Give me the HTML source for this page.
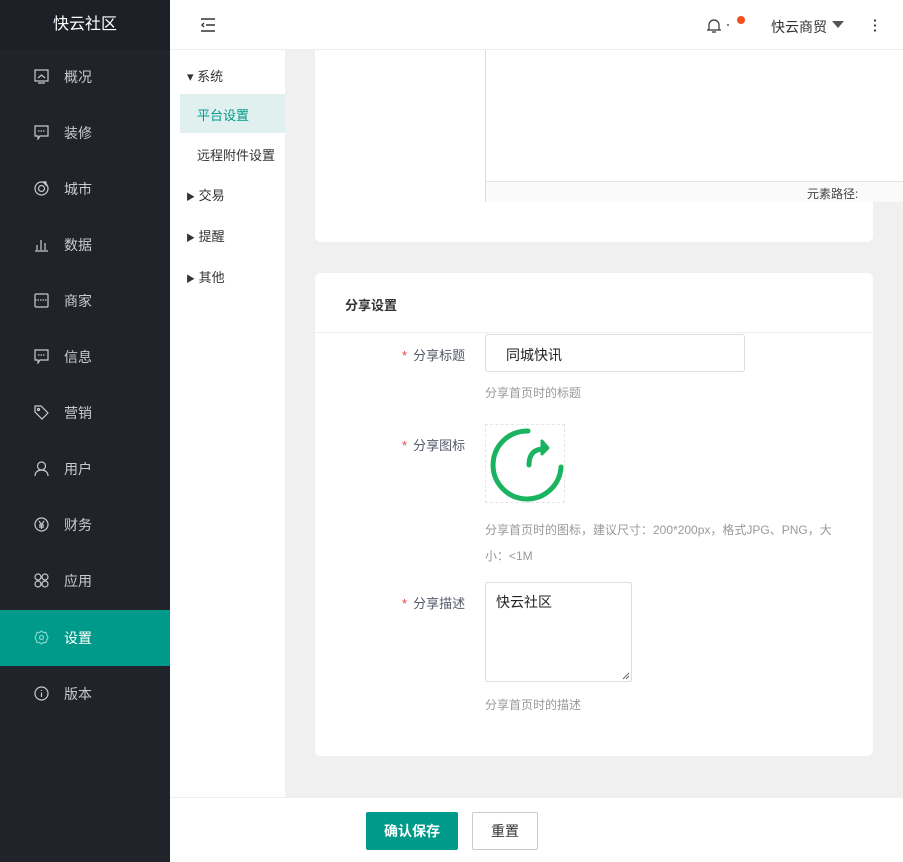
<!DOCTYPE html>
<html><head><meta charset="utf-8"><style>
*{margin:0;padding:0;box-sizing:border-box}
body{width:903px;height:862px;overflow:hidden;font-family:"Liberation Sans","Noto Sans CJK SC",sans-serif;background:#f0f0f0;position:relative;font-size:13px}
.sb{position:absolute;left:0;top:0;width:170px;height:862px;background:#20232a;z-index:6}
.logo{height:50px;line-height:50px;text-align:center;color:#fff;font-size:16px;background:#1e2027}
.it{position:absolute;left:0;width:170px;height:56px;color:#c9cacd;font-size:14px}
.it span{position:absolute;left:64px;top:18px}
.it svg{position:absolute;left:34px;top:20px}
.it.on{background:#009a8a;color:#fff}
.hd{position:absolute;left:170px;top:0;width:733px;height:50px;background:#fff;border-bottom:1px solid #eee;z-index:5}
.sub{position:absolute;left:170px;top:50px;width:115px;height:748px;background:#fff;font-size:13px;color:#333}
.sub div{position:absolute;left:0;width:115px}
.card{position:absolute;background:#fff;border-radius:6px}
.lbl{position:absolute;font-size:13px;color:#555a6a}
.lbl b{color:#f04040;font-weight:normal;margin-right:6px}
.hint{position:absolute;font-size:12px;color:#999}
.bot{position:absolute;left:170px;top:797px;width:733px;height:65px;background:#fff;border-top:1px solid #eee}
</style></head><body>
<div class="sb">
<div class="logo">快云社区</div>
<div class="it" style="top:49px"><svg width="15" height="15" viewBox="0 0 15 15" fill="none" stroke="#c9cacd" stroke-width="1.2"><rect x="1" y="1" width="13" height="11"/><path d="M4 9l3.5-3 3.5 3M4 14h7"/></svg><span>概况</span></div>
<div class="it" style="top:105px"><svg width="15" height="15" viewBox="0 0 15 15" fill="none" stroke="#c9cacd" stroke-width="1.2"><path d="M1 1h13v10H6l-2 3v-3H1z"/><path d="M4 6h7" stroke-dasharray="1.5 1"/></svg><span>装修</span></div>
<div class="it" style="top:161px"><svg width="15" height="15" viewBox="0 0 15 15" fill="none" stroke="#c9cacd" stroke-width="1.2"><circle cx="7.5" cy="7.5" r="6.5"/><circle cx="7.5" cy="7.5" r="3"/><path d="M9 1l3 0 0 3z" fill="#c9cacd"/></svg><span>城市</span></div>
<div class="it" style="top:217px"><svg width="15" height="15" viewBox="0 0 15 15" fill="none" stroke="#c9cacd" stroke-width="1.2"><path d="M1 14h13M3 13V8M7 13V3M11 13V6"/></svg><span>数据</span></div>
<div class="it" style="top:273px"><svg width="15" height="15" viewBox="0 0 15 15" fill="none" stroke="#c9cacd" stroke-width="1.2"><rect x="1" y="1" width="13" height="13" rx="1"/><path d="M1 7h13" stroke-dasharray="1.5 1"/></svg><span>商家</span></div>
<div class="it" style="top:329px"><svg width="15" height="15" viewBox="0 0 15 15" fill="none" stroke="#c9cacd" stroke-width="1.2"><path d="M1 1h13v10H6l-2 3v-3H1z"/><path d="M4 6h7" stroke-dasharray="1.5 1"/></svg><span>信息</span></div>
<div class="it" style="top:385px"><svg width="15" height="15" viewBox="0 0 15 15" fill="none" stroke="#c9cacd" stroke-width="1.2"><path d="M1 1h6l7 7-6 6-7-7z"/><circle cx="4.5" cy="4.5" r="1"/></svg><span>营销</span></div>
<div class="it" style="top:441px"><svg width="15" height="15" viewBox="0 0 15 15" fill="none" stroke="#c9cacd" stroke-width="1.2"><circle cx="7.5" cy="5" r="4"/><path d="M1 15c0-4 3-6 6.5-6s6.5 2 6.5 6"/></svg><span>用户</span></div>
<div class="it" style="top:497px"><svg width="15" height="15" viewBox="0 0 15 15" fill="none" stroke="#c9cacd" stroke-width="1.2"><circle cx="7.5" cy="7.5" r="6.5"/><path d="M5 4l2.5 3.5L10 4M7.5 7.5V12M5 8h5M5 10h5"/></svg><span>财务</span></div>
<div class="it" style="top:553px"><svg width="15" height="15" viewBox="0 0 15 15" fill="none" stroke="#c9cacd" stroke-width="1.2"><circle cx="4" cy="4" r="3"/><circle cx="11" cy="4" r="3"/><circle cx="4" cy="11" r="3"/><circle cx="11" cy="11" r="3"/></svg><span>应用</span></div>
<div class="it on" style="top:610px"><svg width="15" height="15" viewBox="0 0 15 15" fill="none" stroke="#7fd6cc" stroke-width="1.2"><path d="M7.5 1l2 1.5 2.5 0 .8 2.5L14 7.5l-1.2 2.5-.8 2.5H9.5l-2 1.5-2-1.5H3l-.8-2.5L1 7.5l1.2-2.5L3 2.5h2.5z"/><circle cx="7.5" cy="7.5" r="2"/></svg><span>设置</span></div>
<div class="it" style="top:666px"><svg width="15" height="15" viewBox="0 0 15 15" fill="none" stroke="#c9cacd" stroke-width="1.2"><circle cx="7.5" cy="7.5" r="6.5"/><path d="M7.5 6.5V11M7.5 4v1"/></svg><span>版本</span></div>
</div>
<div class="hd">
<svg style="position:absolute;left:30px;top:18px" width="16" height="14" viewBox="0 0 16 14" fill="none" stroke="#333" stroke-width="1.4"><path d="M1 1h14M6 7h9M1 13h14M4 5L2 7l2 2"/></svg>
<svg style="position:absolute;left:536px;top:18px" width="16" height="16" viewBox="0 0 16 16" fill="none" stroke="#333" stroke-width="1.2"><path d="M3 12V7a5 5 0 0110 0v5M1 12h14M6 14h4"/></svg>
<div style="position:absolute;left:557px;top:24px;width:2px;height:2px;background:#888"></div>
<div style="position:absolute;left:567px;top:16px;width:8px;height:8px;border-radius:50%;background:#f4511e"></div>
<div style="position:absolute;left:601px;top:17px;font-size:14px;color:#333">快云商贸</div>
<div style="position:absolute;left:662px;top:21px;border-left:6px solid transparent;border-right:6px solid transparent;border-top:7px solid #555"></div>
<div style="position:absolute;left:704px;top:18px;width:2px;height:14px;background:radial-gradient(circle,#333 1px,transparent 1.2px) 0 0/2px 5px"></div>
</div>
<div class="sub">
<div style="top:16px;left:17px">▾ 系统</div>
<div style="top:44px;left:10px;width:105px;height:39px;background:#dff0ee;color:#009a8a;padding:11px 0 0 17px">平台设置</div>
<div style="top:95px;left:27px">远程附件设置</div>
<div style="top:135px;left:16px"><span style="font-size:9px">▶</span> 交易</div>
<div style="top:176px;left:16px"><span style="font-size:9px">▶</span> 提醒</div>
<div style="top:217px;left:16px"><span style="font-size:9px">▶</span> 其他</div>
</div>
<div class="card" style="left:315px;top:30px;width:558px;height:212px;border-radius:0 0 6px 6px"></div>
<div style="position:absolute;left:485px;top:50px;width:418px;height:152px;border:1px solid #ddd;border-top:none;border-right:none;background:#fff"></div>
<div style="position:absolute;left:486px;top:181px;width:417px;height:21px;border-top:1px solid #e5e5e5;background:#fafafa;font-size:12px;color:#444;padding:3px 0 0 321px">元素路径:</div>
<div class="card" style="left:315px;top:273px;width:558px;height:483px">
<div style="position:absolute;left:30px;top:22px;font-size:13px;font-weight:bold;color:#333">分享设置</div>
<div style="position:absolute;left:0;top:59px;width:558px;height:1px;background:#f0f0f0"></div>
</div>
<div class="lbl" style="left:402px;top:345px"><b>*</b>分享标题</div>
<div style="position:absolute;left:485px;top:334px;width:260px;height:38px;border:1px solid #ddd;border-radius:3px;background:#fff;padding:10px 0 0 20px;font-size:14px;color:#222">同城快讯</div>
<div class="hint" style="left:485px;top:384px">分享首页时的标题</div>
<div class="lbl" style="left:402px;top:435px"><b>*</b>分享图标</div>
<div style="position:absolute;left:485px;top:424px;width:80px;height:79px;border:1px dashed #e5e5e5"></div>
<svg style="position:absolute;left:485px;top:424px" width="80" height="79" viewBox="0 0 80 79" fill="none" stroke="#1ab460" stroke-width="5" stroke-linecap="round"><path d="M43 7A34 34 0 1 0 76 43"/><path d="M44 41c0-10 4-15 13-16"/><path d="M57 17l6 7-6 6z" fill="#1ab460" stroke-width="3" stroke-linejoin="round"/></svg>
<div class="hint" style="left:485px;top:517px;line-height:26px;width:360px">分享首页时的图标，建议尺寸：200*200px，格式JPG、PNG，大小：&lt;1M</div>
<div class="lbl" style="left:402px;top:593px"><b>*</b>分享描述</div>
<div style="position:absolute;left:485px;top:582px;width:147px;height:100px;border:1px solid #ddd;border-radius:2px;background:#fff;padding:9px 0 0 10px;font-size:14px;color:#222">快云社区<svg style="position:absolute;right:1px;bottom:1px" width="8" height="8" viewBox="0 0 8 8" stroke="#666"><path d="M1 7L7 1M4 7L7 4"/></svg></div>
<div class="hint" style="left:485px;top:696px">分享首页时的描述</div>
<div class="bot">
<div style="position:absolute;left:196px;top:14px;width:92px;height:38px;background:#009a8a;border-radius:2px;color:#fff;font-weight:bold;font-size:14px;text-align:center;line-height:38px">确认保存</div>
<div style="position:absolute;left:302px;top:14px;width:66px;height:38px;border:1px solid #ccc;border-radius:2px;color:#333;font-size:14px;text-align:center;line-height:36px">重置</div>
</div>
</body></html>
